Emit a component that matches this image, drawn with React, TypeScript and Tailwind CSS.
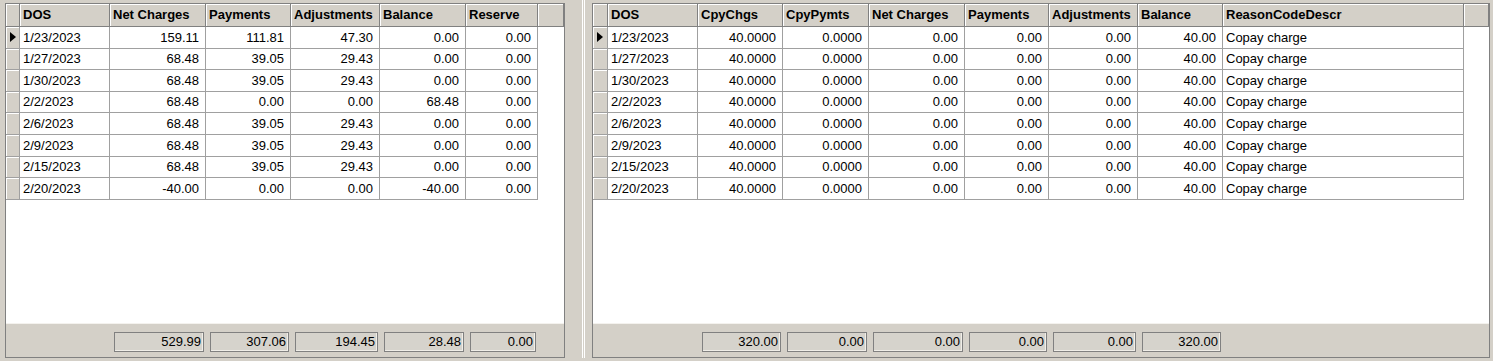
import React from "react";

type Col = { label: string; w: string; right?: boolean; total?: string };

const LEFT_COLS: Col[] = [
  { label: "DOS", w: "w-[90px]" },
  { label: "Net Charges", w: "w-[96px]", right: true, total: "529.99" },
  { label: "Payments", w: "w-[85px]", right: true, total: "307.06" },
  { label: "Adjustments", w: "w-[89px]", right: true, total: "194.45" },
  { label: "Balance", w: "w-[86px]", right: true, total: "28.48" },
  { label: "Reserve", w: "w-[72px]", right: true, total: "0.00" },
];

const LEFT_ROWS = [
  ["1/23/2023", "159.11", "111.81", "47.30", "0.00", "0.00"],
  ["1/27/2023", "68.48", "39.05", "29.43", "0.00", "0.00"],
  ["1/30/2023", "68.48", "39.05", "29.43", "0.00", "0.00"],
  ["2/2/2023", "68.48", "0.00", "0.00", "68.48", "0.00"],
  ["2/6/2023", "68.48", "39.05", "29.43", "0.00", "0.00"],
  ["2/9/2023", "68.48", "39.05", "29.43", "0.00", "0.00"],
  ["2/15/2023", "68.48", "39.05", "29.43", "0.00", "0.00"],
  ["2/20/2023", "-40.00", "0.00", "0.00", "-40.00", "0.00"],
];

const RIGHT_COLS: Col[] = [
  { label: "DOS", w: "w-[90px]" },
  { label: "CpyChgs", w: "w-[85px]", right: true, total: "320.00" },
  { label: "CpyPymts", w: "w-[86px]", right: true, total: "0.00" },
  { label: "Net Charges", w: "w-[96px]", right: true, total: "0.00" },
  { label: "Payments", w: "w-[84px]", right: true, total: "0.00" },
  { label: "Adjustments", w: "w-[89px]", right: true, total: "0.00" },
  { label: "Balance", w: "w-[85px]", right: true, total: "320.00" },
  { label: "ReasonCodeDescr", w: "w-[241px]" },
];

const RIGHT_DATES = ["1/23/2023", "1/27/2023", "1/30/2023", "2/2/2023", "2/6/2023", "2/9/2023", "2/15/2023", "2/20/2023"];
const RIGHT_ROWS = RIGHT_DATES.map((d) => [d, "40.0000", "0.0000", "0.00", "0.00", "0.00", "40.00", "Copay charge"]);

function Arrow() {
  return (
    <svg width="6" height="10" viewBox="0 0 6 10">
      <polygon points="0,0 6,5 0,10" fill="#000" />
    </svg>
  );
}

function Grid({ cols, rows, rhw, width }: { cols: Col[]; rows: string[][]; rhw: string; width: string }) {
  return (
    <div className={`${width} h-[355px] border border-[#808080] flex flex-col shrink-0`}>
      <div className="flex-1 bg-white flex flex-col">
        {/* header */}
        <div className="flex h-[23px] shrink-0">
          <div className={`${rhw} shrink-0 bg-[#d4d0c8] border-r border-b border-[#808080] shadow-[inset_1px_1px_0_#fff]`} />
          {cols.map((c) => (
            <div
              key={c.label}
              className={`${c.w} shrink-0 bg-[#d4d0c8] border-r border-b border-[#808080] shadow-[inset_1px_1px_0_#fff] flex items-center pl-[3px] font-bold whitespace-nowrap overflow-hidden`}
            >
              {c.label}
            </div>
          ))}
          <div className="flex-1 bg-[#d4d0c8] border-r border-b border-[#808080] shadow-[inset_1px_1px_0_#fff]" />
        </div>
        {/* rows */}
        {rows.map((r, i) => (
          <div key={i} className="flex h-[21.6px] shrink-0">
            <div className={`${rhw} shrink-0 bg-[#d4d0c8] border-r border-b border-[#a0a0a0] shadow-[inset_1px_1px_0_#fff] flex items-center justify-center`}>
              {i === 0 && <Arrow />}
            </div>
            {cols.map((c, j) => (
              <div
                key={j}
                className={`${c.w} shrink-0 border-r border-b border-[#a0a0a0] flex items-center whitespace-nowrap overflow-hidden ${
                  c.right ? "justify-end pr-[6px]" : "pl-[3px]"
                }`}
              >
                {r[j]}
              </div>
            ))}
          </div>
        ))}
      </div>
      {/* totals footer */}
      <div className="h-[34px] shrink-0 bg-[#d4d0c8] border-t border-[#f4f2ee] flex pt-[8px]">
        <div className={`${rhw} shrink-0`} />
        {cols.map((c, j) => (
          <div key={j} className={`${c.w} shrink-0 pl-[4px] pr-[2px]`}>
            {c.total && (
              <div className="h-[20px] bg-[#d6d3cc] border border-[#808080] shadow-[inset_-1px_-1px_0_#f0eee8] flex items-center justify-end pr-[2px]">
                {c.total}
              </div>
            )}
          </div>
        ))}
      </div>
    </div>
  );
}

export default function App() {
  return (
    <div className="w-[1493px] h-[361px] bg-[#d4d0c8] flex pt-[3px] pl-[5px] text-[13px] text-black font-['Liberation_Sans',Arial,sans-serif] overflow-hidden">
      <Grid cols={LEFT_COLS} rows={LEFT_ROWS} rhw="w-[14px]" width="w-[560px]" />
      <div className="ml-[17px] mr-[7px] w-[3px] h-[358px] -mt-[3px] border-l border-white border-r border-[#808080] shrink-0" />
      <Grid cols={RIGHT_COLS} rows={RIGHT_ROWS} rhw="w-[15px]" width="w-[898px]" />
    </div>
  );
}
